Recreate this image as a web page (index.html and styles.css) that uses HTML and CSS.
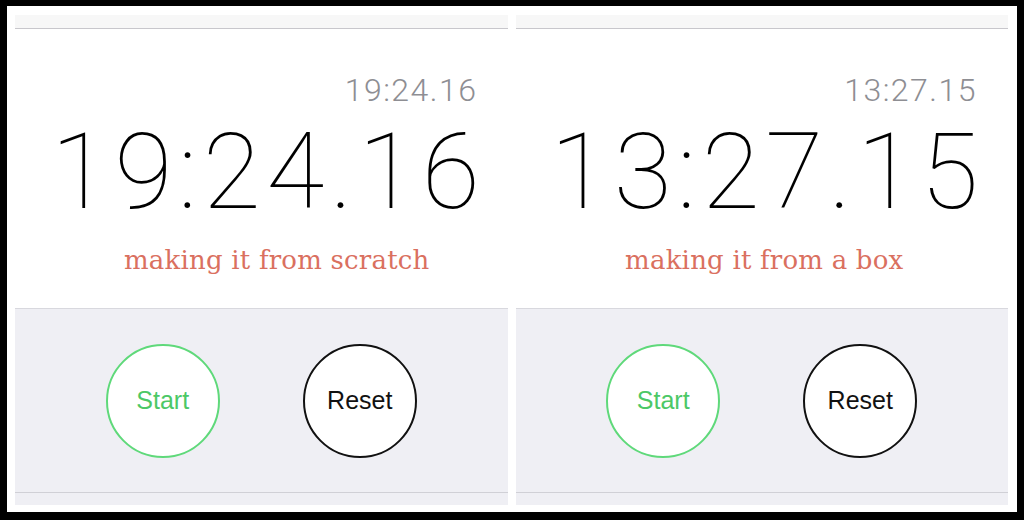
FILE: index.html
```html
<!DOCTYPE html>
<html lang="en">
<head>
<meta charset="utf-8">
<title>Stopwatch comparison</title>
<link rel="stylesheet" href="styles.css">
</head>
<body>
<div class="frame">
  <section class="panel">
    <div class="top-strip"></div>
    <div class="display">
      <div class="lap-time">19:24.16</div>
      <div class="main-time">19:24.16</div>
      <div class="caption caption-left">making it from scratch</div>
    </div>
    <div class="controls">
      <button class="round-btn start">Start</button>
      <button class="round-btn reset">Reset</button>
    </div>
    <div class="bottom-strip"></div>
  </section>
  <section class="panel panel-right">
    <div class="top-strip"></div>
    <div class="display">
      <div class="lap-time">13:27.15</div>
      <div class="main-time">13:27.15</div>
      <div class="caption caption-right">making it from a box</div>
    </div>
    <div class="controls">
      <button class="round-btn start">Start</button>
      <button class="round-btn reset">Reset</button>
    </div>
    <div class="bottom-strip"></div>
  </section>
</div>
</body>
</html>
```

FILE: styles.css
```css
html, body {
  margin: 0;
  padding: 0;
  background: #000;
}

.frame {
  box-sizing: border-box;
  width: 1010px;
  height: 506px;
  margin: 6px 0 0 7px;
  background: #fff;
  display: flex;
  gap: 8px;
  padding: 9px 9px 7px 8px;
}

.panel {
  flex: 1;
  display: flex;
  flex-direction: column;
}

.top-strip {
  height: 13px;
  background: #f7f7f7;
  border-bottom: 1px solid #c8c7cc;
}

.display {
  height: 279px;
  background: #fff;
  display: flex;
  flex-direction: column;
  font-family: Roboto, "Liberation Sans", sans-serif;
}

.lap-time {
  text-align: right;
  font-size: 32px;
  font-weight: 300;
  letter-spacing: 1.5px;
  color: #8e8e93;
  line-height: 32px;
  margin-top: 45px;
  padding-right: 30px;
}

.main-time {
  text-align: right;
  font-size: 106px;
  font-weight: 100;
  letter-spacing: 5.6px;
  color: #000;
  line-height: 106px;
  margin-top: 13px;
  padding-right: 22px;
}

.panel-right .lap-time {
  padding-right: 31px;
}

.panel-right .main-time {
  letter-spacing: 5.5px;
  padding-right: 24px;
}

.caption {
  text-align: center;
  font-family: "DejaVu Serif", serif;
  font-size: 26px;
  letter-spacing: 0.2px;
  color: #da705f;
  line-height: 30px;
  margin-top: 20px;
}

.caption-left {
  padding-left: 31px;
}

.caption-right {
  padding-left: 5px;
}

.controls {
  height: 183px;
  background: #efeff4;
  border-top: 1px solid #d8d8de;
  display: flex;
  align-items: center;
  justify-content: center;
  gap: 83px;
}

.round-btn {
  box-sizing: border-box;
  width: 114px;
  height: 114px;
  border-radius: 50%;
  background: #fff;
  font-family: "Liberation Sans", Arial, sans-serif;
  font-size: 25px;
  padding: 0;
}

.start {
  border: 2px solid #5fd97a;
  color: #4cc866;
}

.reset {
  border: 2px solid #111;
  color: #111;
}

.bottom-strip {
  height: 12px;
  background: #efeff4;
  border-top: 1px solid #d0d0d6;
}
```
